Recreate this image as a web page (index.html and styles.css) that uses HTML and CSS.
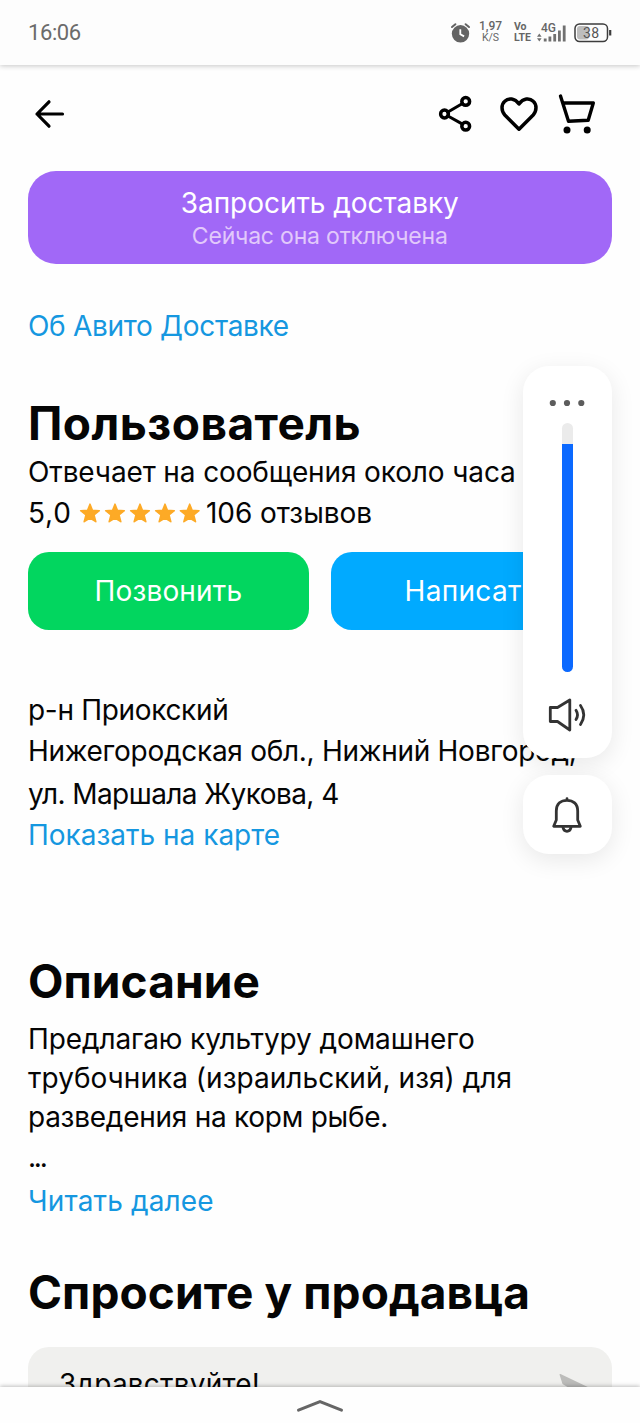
FILE: index.html
```html
<!DOCTYPE html>
<html lang="ru">
<head>
<meta charset="utf-8">
<title>Объявление</title>
<link rel="stylesheet" href="styles.css">
</head>
<body>
<div class="phone">
  <header class="status">
    <span class="clock">16:06</span>
    <div class="status-icons">
      <svg class="alarm" width="20" height="20" viewBox="0 0 20 20"><circle cx="9.5" cy="10.8" r="8.7" fill="#646464"/><path d="M1 4 4.4 1.2M18 4 14.600 1.200" stroke="#646464" stroke-width="2" stroke-linecap="round"/><path d="M9.3 6.3v4.9l3.8 2.2" fill="none" stroke="#fff" stroke-width="1.8"/></svg>
      <div class="pair speed"><b>1,97</b><span>K/S</span></div>
      <div class="pair volte"><b>Vo</b><b>LTE</b></div>
      <div class="mobile">
        <span class="net">4G</span>
        <svg class="signal" width="30" height="18" viewBox="0 0 30 18" fill="#707070"><path d="M0 12.800 2.300 9.500l2.300 3.300zM0 14.200l2.300 3.300 2.300-3.300z"/><path d="M6.800 14.500h2.800V17.500H6.800zM11.500 12.500h2.800v5h-2.800zM16.300 10h2.800v7.500h-2.800zM21 6.500h2.800v11H21zM25.800 1.500h2.800v16h-2.800z"/></svg>
      </div>
      <div class="battery">
        <svg width="38" height="20" viewBox="0 0 38 20"><rect x="3" y="3" width="12" height="13.500" rx="3" fill="#bdbdbd"/><rect x="1" y="1" width="32.500" height="17.500" rx="4.500" fill="none" stroke="#3d3d3d" stroke-width="1.500"/><path d="M36.200 7v5.500" stroke="#3d3d3d" stroke-width="2.200"/></svg>
        <span class="charge">38</span>
      </div>
    </div>
  </header>

  <nav class="toolbar">
    <svg width="30" height="30" viewBox="0 0 30 30" class="ink back"><path d="M27.500 15H2M14 2.800 2 15l12 12.200" stroke-width="3.200"/></svg>
    <div class="actions">
      <svg width="34" height="38" viewBox="0 0 34 38" class="ink"><path d="M8.500 17.300 23.500 8.500M8.500 20.700l15 8.400" stroke-width="3"/><circle cx="5.500" cy="19" r="3.900" stroke-width="3.500"/><circle cx="26.700" cy="6.400" r="3.900" stroke-width="3.500"/><circle cx="26.700" cy="31.200" r="3.900" stroke-width="3.500"/></svg>
      <svg width="38" height="38" viewBox="0 0 38 38" class="ink heart"><path d="M19 34.200 4.800 20C1.100 16 1.100 9.500 4.800 6.300 8.600 2.600 14.700 3.200 19 9c4.300-5.800 10.400-6.400 14.200-2.700 3.700 3.200 3.700 9.700 0 13.700Z" stroke-width="3.500"/></svg>
      <svg width="38" height="42" viewBox="0 0 38 42" class="ink cart"><path d="M2.500 3 10.500 28.200 30.200 27.200 35.300 10H6" stroke-width="3.400"/><circle cx="9" cy="37" r="3.500" class="dot"/><circle cx="29.200" cy="37" r="3.500" class="dot"/></svg>
    </div>
  </nav>

  <main class="page">
    <button class="delivery"><span class="delivery-title">Запросить доставку</span><span class="delivery-note">Сейчас она отключена</span></button>
    <a class="line link about">Об Авито Доставке</a>

    <h2 class="seller">Пользователь</h2>
    <p class="line replies">Отвечает на сообщения около часа</p>
    <div class="line rating">
      <span class="score">5,0</span>
      <svg width="120" height="20" viewBox="0 0 120 20" fill="#fdaa26" stroke="#fdaa26" stroke-width="1.600" stroke-linejoin="round"><defs><path id="star" d="M10 1.200 12.400 7.300 19.300 7.700 14 12 15.800 18.700 10 15 4.200 18.700 6 12 .7 7.700 7.600 7.300Z"/></defs><use href="#star"/><use href="#star" x="25"/><use href="#star" x="50"/><use href="#star" x="75"/><use href="#star" x="99.700"/></svg>
      <span class="reviews">106 отзывов</span>
    </div>
    <div class="buttons">
      <button class="call">Позвонить</button>
      <button class="write">Написать</button>
    </div>

    <section class="address">
      <p class="line district">р-н Приокский</p>
      <p class="line city">Нижегородская обл., Нижний Новгород,</p>
      <p class="line street">ул. Маршала Жукова, 4</p>
      <a class="line link map">Показать на карте</a>
    </section>

    <h2 class="about-title">Описание</h2>
    <div class="description">
      <p class="d1">Предлагаю культуру домашнего</p>
      <p class="d2">трубочника (израильский, изя) для</p>
      <p class="d3">разведения на корм рыбе.</p>
    </div>
    <p class="line dots">...</p>
    <a class="line link more">Читать далее</a>

    <h2 class="ask">Спросите у продавца</h2>
    <div class="message">
      <span>Здравствуйте!</span>
      <svg width="34" height="30" viewBox="0 0 34 30" fill="#bcbcba"><path d="M.5.500Q.5-.3 1.500.1L33 15 1.500 29.900 4.500 18.500 17 15 8.500 13 3.500 10Z"/></svg>
    </div>
  </main>

  <footer class="sysbar"><svg width="48" height="14" viewBox="0 0 48 14" fill="none" stroke="#666" stroke-width="3" stroke-linecap="round" stroke-linejoin="miter"><path d="M2.500 11.200 24 2.500 45.500 11.200"/></svg></footer>

  <aside class="volume">
    <div class="volume-panel">
      <svg width="36" height="8" viewBox="0 0 36 8" fill="#5c5c5c"><circle cx="3.800" cy="4" r="3.100"/><circle cx="18" cy="4" r="3.100"/><circle cx="32.300" cy="4" r="3.100"/></svg>
      <div class="track"><div class="level"></div></div>
      <svg class="speaker" width="38" height="34" viewBox="0 0 38 34" fill="none" stroke="#333" stroke-width="2.800" stroke-linecap="round" stroke-linejoin="round"><path d="M2.300 9.500H9.500L21.800 2v30L9.500 23.500H2.300Z"/><path d="M28 12.300q3 4.600 0 9.300M32.500 7.500q6.500 9.200 0 19"/></svg>
    </div>
    <div class="bell-panel">
      <svg width="30" height="36" viewBox="0 0 30 36" fill="none" stroke="#333" stroke-width="2.800" stroke-linejoin="round" stroke-linecap="round"><path d="M15 1.700v1.500M1.700 29.300h26.600L25.700 23V14C25.700 6.500 21 3.300 15 3.300S4.300 6.500 4.300 14v9Z"/><path d="M11 30.500q.8 3.800 4 3.800t4-3.800"/></svg>
    </div>
  </aside>
</div>
</body>
</html>
```
FILE: styles.css
```css
* { box-sizing: border-box; }
body { margin: 0; background: #fefefe; color: #050505; font-family: Inter, "Noto Sans", sans-serif; font-size: 28px; }
h2, p { margin: 0; }
svg { display: block; flex: none; overflow: visible; }
button { border: 0; padding: 0; font: inherit; color: #fff; }
.phone { position: relative; width: 640px; height: 1423px; overflow: hidden; display: flex; flex-direction: column; }

.status { height: 65px; flex: none; background: #fdfdfd; display: flex; align-items: center; justify-content: space-between; padding: 0 28px; box-shadow: 0 1px 5px rgba(0, 0, 0, .22); font-family: Roboto, sans-serif; color: #6b6b6b; }
.clock { font-size: 22px; letter-spacing: -.4px; line-height: 24px; }
.status-icons { display: flex; align-items: center; height: 24px; }
.pair { display: flex; flex-direction: column; align-items: center; line-height: 11px; color: #666; }
.pair b { font-weight: 500; }
.speed { margin-left: 8px; width: 23px; font-size: 12px; margin-top: -2px; }
.speed span { font-size: 10.5px; }
.volte { margin-left: 12px; align-items: flex-start; width: 17px; font-size: 10.5px; margin-top: -1px; }
.volte b { font-weight: 700; }
.mobile { position: relative; margin-left: 6px; width: 30px; height: 18px; }
.net { position: absolute; left: 4px; top: -3px; font-size: 12px; line-height: 14px; font-weight: 500; color: #666; }
.battery { position: relative; margin-left: 7px; width: 38px; height: 20px; }
.charge { position: absolute; left: 9px; top: 2px; font-size: 14px; line-height: 16px; letter-spacing: .5px; color: #555; }

.toolbar { height: 98px; flex: none; display: flex; align-items: center; justify-content: space-between; padding: 0 44px 0 35px; }
.actions { display: flex; align-items: center; }
.heart { margin-left: 27px; }
.cart { margin-left: 20px; }
.ink { fill: none; stroke: #000; stroke-linecap: round; stroke-linejoin: round; }
.dot { fill: #000; stroke: none; }

.page { flex: none; height: 1224px; overflow: hidden; padding: 8px 28.5px 0 28px; display: flex; flex-direction: column; }
.line { flex: none; height: 40px; line-height: 40px; white-space: nowrap; }
.link { color: #1597e0; }
h2 { flex: none; font-size: 46px; font-weight: 700; line-height: 54px; height: 54px; white-space: nowrap; }

.delivery { flex: none; height: 93px; border-radius: 28px; background: #a168f7; display: flex; flex-direction: column; align-items: center; padding-top: 15px; }
.delivery-title { line-height: 34px; letter-spacing: -.05px; }
.delivery-note { font-size: 23px; line-height: 32px; letter-spacing: -.2px; color: #e2c9fb; }
.about { margin-top: 42px; letter-spacing: -.3px; }
.seller { margin-top: 50px; letter-spacing: .47px; }
.replies { margin-top: 2px; letter-spacing: -.12px; }
.rating { margin-top: 1px; display: flex; align-items: center; }
.score { letter-spacing: .8px; width: 52px; }
.reviews { margin-left: 6px; letter-spacing: -.05px; }

.buttons { flex: none; margin-top: 19px; height: 78px; display: grid; grid-template-columns: 1fr 1fr; gap: 22px; }
.buttons button { border-radius: 21px; }
.call { background: #02d65f; letter-spacing: .15px; }
.write { background: #01aaff; letter-spacing: .3px; }

.address { flex: none; margin-top: 60px; display: flex; flex-direction: column; }
.district { letter-spacing: -.32px; }
.city { margin-top: 1px; letter-spacing: -.28px; }
.street { margin-top: 3px; letter-spacing: -.57px; }
.map { margin-top: 1px; }

.about-title { margin-top: 99px; letter-spacing: .1px; }
.description { flex: none; margin-top: 11.5px; line-height: 39px; white-space: nowrap; }
.d1 { letter-spacing: -.1px; }
.d2 { letter-spacing: .03px; }
.d3 { letter-spacing: -.26px; }
.dots { margin-top: .5px; letter-spacing: -2.2px; }
.more { margin-top: 4px; letter-spacing: .15px; }
.ask { margin-top: 44px; letter-spacing: .08px; }
.message { flex: none; margin-top: 28px; height: 76px; border-radius: 21px; background: #f0f0ee; display: flex; justify-content: space-between; align-items: center; padding: 0 19px 2px 31px; letter-spacing: .2px; }
.message svg { margin-top: 10px; }

.sysbar { flex: 1; background: #fefefe; display: flex; justify-content: center; padding-top: 12px; box-shadow: 0 -1px 4px rgba(0, 0, 0, .25); }

.volume { position: absolute; left: 523px; top: 366px; width: 88.5px; display: flex; flex-direction: column; gap: 17px; }
.volume-panel, .bell-panel { background: #fff; display: flex; flex-direction: column; align-items: center; box-shadow: 0 6px 24px rgba(0, 0, 0, .09); }
.volume-panel { height: 392px; border-radius: 26px; padding-top: 32.5px; }
.track { margin-top: 16.5px; width: 11px; height: 249px; border-radius: 6px; background: #ebebeb; overflow: hidden; display: flex; align-items: flex-end; }
.level { width: 11px; height: 228px; background: #0b69ff; }
.speaker { margin-top: 25.5px; }
.bell-panel { height: 79px; border-radius: 26px; justify-content: center; }
```
